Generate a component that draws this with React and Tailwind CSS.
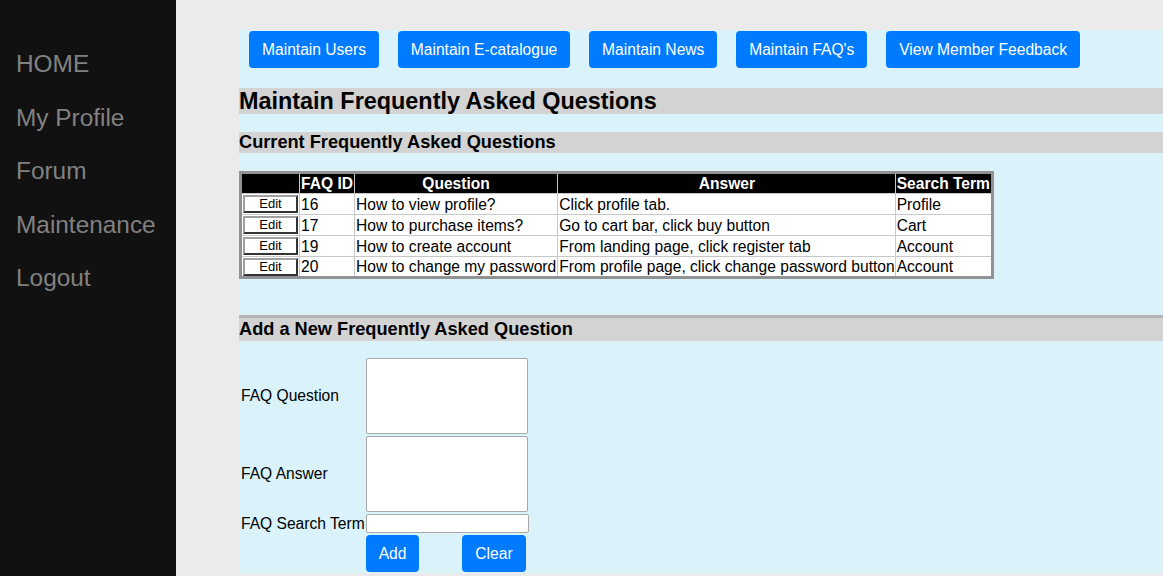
import React from "react";

const navLinks = ["HOME", "My Profile", "Forum", "Maintenance", "Logout"];

const adminButtons = [
  "Maintain Users",
  "Maintain E-catalogue",
  "Maintain News",
  "Maintain FAQ's",
  "View Member Feedback",
];

const faqs = [
  { id: 16, question: "How to view profile?", answer: "Click profile tab.", term: "Profile" },
  { id: 17, question: "How to purchase items?", answer: "Go to cart bar, click buy button", term: "Cart" },
  { id: 19, question: "How to create account", answer: "From landing page, click register tab", term: "Account" },
  { id: 20, question: "How to change my password", answer: "From profile page, click change password button", term: "Account" },
];

function App() {
  return (
    <div
      className="flex w-screen h-screen overflow-hidden bg-[#ebebeb] text-black"
      style={{ fontFamily: '"Liberation Sans", Arial, sans-serif' }}
    >
      {/* sidebar */}
      <aside className="w-[176px] shrink-0 bg-[#111111] pt-[38px] flex flex-col">
        {navLinks.map((link) => (
          <a
            key={link}
            href="#"
            className="h-[53.5px] flex items-center pl-[16px] text-[24.4px] text-[#818181]"
          >
            {link}
          </a>
        ))}
      </aside>

      <main className="flex-1 pl-[63px] pt-[30px]">
        <div className="bg-[#daf3fa] pt-[1px] pb-[1px]">
          <div className="flex gap-[18.8px] pl-[10px]">
            {adminButtons.map((b) => (
              <button
                key={b}
                className="h-[37px] px-[13px] rounded-[4px] bg-[#007bff] text-white text-[15.6px]"
              >
                {b}
              </button>
            ))}
          </div>

          <h1 className="mt-[20px] h-[26px] bg-[#d3d3d3] text-[23.4px] leading-[26px] font-bold">
            Maintain Frequently Asked Questions
          </h1>

          <h2 className="mt-[18px] h-[21px] bg-[#d3d3d3] text-[18.2px] leading-[21px] font-bold">
            Current Frequently Asked Questions
          </h2>

          <table className="mt-[18px] border-collapse border-[3px] border-[#929292] bg-white text-[15.6px] leading-[18px]">
            <thead>
              <tr className="bg-black text-white font-bold whitespace-nowrap">
                <th className="w-[59px] h-[20px] border border-[#c8c8c8] p-0"></th>
                <th className="w-[54px] h-[20px] border border-[#c8c8c8] px-[1px] pt-[1px] pb-0 text-left">FAQ ID</th>
                <th className="w-[202px] h-[20px] border border-[#c8c8c8] px-[1px] pt-[1px] pb-0">Question</th>
                <th className="w-[333px] h-[20px] border border-[#c8c8c8] pl-[1px] pr-0 pt-[1px] pb-0">Answer</th>
                <th className="w-[96px] h-[20px] border border-[#c8c8c8] px-[1px] pt-[1px] pb-0 text-left">Search Term</th>
              </tr>
            </thead>
            <tbody>
              {faqs.map((f) => (
                <tr key={f.id} className="whitespace-nowrap">
                  <td className="h-[21px] border border-[#c8c8c8] px-[1px] pt-[1px] pb-0 align-top">
                    <button className="block w-full h-[18px] bg-white text-[13px] leading-[14px] border-2 border-t-[#a0a0a0] border-l-[#a0a0a0] border-r-[#333333] border-b-[#333333]">
                      Edit
                    </button>
                  </td>
                  <td className="h-[21px] border border-[#c8c8c8] px-[1px] pt-[1px] pb-0">{f.id}</td>
                  <td className="h-[21px] border border-[#c8c8c8] px-[1px] pt-[1px] pb-0">{f.question}</td>
                  <td className="h-[21px] border border-[#c8c8c8] pl-[1px] pr-0 pt-[1px] pb-0">{f.answer}</td>
                  <td className="h-[21px] border border-[#c8c8c8] px-[1px] pt-[1px] pb-0">{f.term}</td>
                </tr>
              ))}
            </tbody>
          </table>

          <div className="mt-[36px] border-t-[3px] border-[#b4b4b4]"></div>
          <h2 className="h-[23px] bg-[#d3d3d3] text-[18.2px] leading-[23px] font-bold">
            Add a New Frequently Asked Question
          </h2>

          <form
            className="mt-[17px] ml-[2px] text-[15.6px]"
            onSubmit={(e) => e.preventDefault()}
          >
            <div className="flex items-center h-[76px]">
              <label className="w-[125px]">FAQ Question</label>
              <textarea className="w-[162px] h-[76px] bg-white border border-[#a9a9a9] rounded-[2px] resize-none"></textarea>
            </div>
            <div className="flex items-center h-[76px] mt-[2px]">
              <label className="w-[125px]">FAQ Answer</label>
              <textarea className="w-[162px] h-[76px] bg-white border border-[#a9a9a9] rounded-[2px] resize-none"></textarea>
            </div>
            <div className="flex items-center h-[19px] mt-[2px]">
              <label className="w-[125px]">FAQ Search Term</label>
              <input
                type="text"
                className="w-[163px] h-[19px] bg-white border border-[#a9a9a9] rounded-[2px]"
              />
            </div>
            <div className="flex mt-[2px] pl-[125px]">
              <button
                type="submit"
                className="w-[53px] h-[37px] rounded-[4px] bg-[#007bff] text-white text-[15.6px]"
              >
                Add
              </button>
              <button
                type="reset"
                className="ml-[43px] w-[64px] h-[37px] rounded-[4px] bg-[#007bff] text-white text-[15.6px]"
              >
                Clear
              </button>
            </div>
          </form>
        </div>
      </main>
    </div>
  );
}

export default App;
